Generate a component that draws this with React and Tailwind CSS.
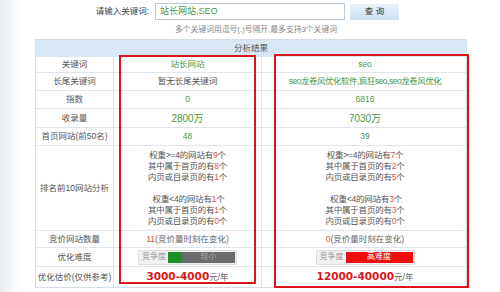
import React from "react";

const F = { fontFamily: '"Liberation Sans", "Noto Sans CJK SC", sans-serif' };
const G = "text-[#4a974a]";

function Row({ label, h, children, last }) {
  return (
    <div className={`grid grid-cols-[78px_148px_206px] ${last ? "" : "border-b border-[#dfe5ea]"}`} style={{ height: h }}>
      <div className="flex items-center justify-center border-r border-[#dfe5ea] text-[#555]">{label}</div>
      <div className="flex items-center justify-center border-r border-[#dfe5ea]">{children[0]}</div>
      <div className="flex items-center justify-center">{children[1]}</div>
    </div>
  );
}

const R = ({ children }) => <span className="text-[#e0504a]">{children}</span>;

function Rank({ a, b, c, d, e, f }) {
  return (
    <div className="flex flex-col items-center leading-[11px] text-[#555] tracking-[-0.2px]">
      <div>权重&gt;=4的网站有<R>{a}</R>个</div>
      <div>其中属于首页的有<R>{b}</R>个</div>
      <div>内页或目录页的有<R>{c}</R>个</div>
      <div className="h-[11px]"></div>
      <div>&nbsp;权重&lt;4的网站有<R>{d}</R>个</div>
      <div>其中属于首页的有<R>{e}</R>个</div>
      <div>内页或目录页的有<R>{f}</R>个</div>
    </div>
  );
}

function Difficulty({ hard }) {
  return (
    <div className="flex items-center w-[99px] h-[15px] border border-[#dedede] bg-[#f1f1f1] pl-[1px]">
      <div className="w-[28px] text-center text-[#999] text-[8px]">竞争度</div>
      <div className="flex-1 h-[11px] mr-[1px] relative flex">
        {hard ? (
          <div className="flex-1 bg-[#ee0d0d] flex items-center justify-center text-white text-[8px]">高难度</div>
        ) : (
          <>
            <div className="w-[14px] bg-[#1f8f2a]"></div>
            <div className="flex-1 bg-[#6b6b6b] flex items-center justify-center text-[#aaa] text-[8px]">较小</div>
          </>
        )}
      </div>
    </div>
  );
}

export default function App() {
  return (
    <div className="w-[500px] h-[292px] relative overflow-hidden bg-gradient-to-r from-[#e6edf3] via-white via-[4%] to-white text-[8.5px]" style={F}>
      <div className="flex items-center h-[17px] mt-[3px]">
        <div className="w-[155px] pr-[6px] text-right text-[#444]">请输入关键词:</div>
        <div className={`w-[190px] h-[17px] border border-[#bccad6] bg-white flex items-center px-[4px] ${G} text-[9px]`}>站长网站,SEO</div>
        <div className="ml-[5px] w-[49px] h-[16px] bg-gradient-to-b from-[#e8f1f9] to-[#cfe0f0] flex items-center justify-center text-[#333]">查 询</div>
      </div>
      <div className="h-[19px] flex items-center pl-[175px] text-[#888] text-[7.8px]">多个关键词用逗号(,)号隔开,最多支持3个关键词</div>
      <div className="ml-[35px] w-[432px] border border-[#d3dde6] bg-white">
        <div className="h-[17px] bg-[#d9e7f5] flex items-center justify-center text-[#555]">分析结果</div>
        <Row label="关键词" h={16}>
          <span className={G}>站长网站</span>
          <span className={G}>seo</span>
        </Row>
        <Row label="长尾关键词" h={18}>
          <span className="text-[#555]">暂无长尾关键词</span>
          <span className={`${G} tracking-[-0.5px]`}>seo龙卷风优化软件,疯狂seo,seo龙卷风优化</span>
        </Row>
        <Row label="指数" h={18}>
          <span className={G}>0</span>
          <span className={G}>6816</span>
        </Row>
        <Row label="收录量" h={19}>
          <span className={`${G} text-[10px]`}>2800万</span>
          <span className={`${G} text-[10px]`}>7030万</span>
        </Row>
        <Row label="首页网站(前50名)" h={18}>
          <span className={G}>48</span>
          <span className={G}>39</span>
        </Row>
        <Row label="排名前10网站分析" h={85}>
          <Rank a="9" b="8" c="1" d="1" e="1" f="0" />
          <Rank a="7" b="2" c="5" d="3" e="3" f="0" />
        </Row>
        <Row label="竞价网站数量" h={17}>
          <span className="text-[#666]"><R>11</R>(竞价量时刻在变化)</span>
          <span className="text-[#666]"><R>0</R>(竞价量时刻在变化)</span>
        </Row>
        <Row label="优化难度" h={19}>
          <Difficulty />
          <Difficulty hard />
        </Row>
        <Row label="优化估价(仅供参考)" h={20} last>
          <span className="text-[#666]">
            <span className="text-[#d8191c] font-bold text-[10.5px]" style={{ fontFamily: '"DejaVu Sans", sans-serif' }}>3000-4000</span>元/年
          </span>
          <span className="text-[#666]">
            <span className="text-[#d8191c] font-bold text-[10.5px]" style={{ fontFamily: '"DejaVu Sans", sans-serif' }}>12000-40000</span>元/年
          </span>
        </Row>
      </div>
      <div className="absolute left-[119px] top-[55px] w-[137px] h-[229px] border-2 border-[#d9141b]"></div>
      <div className="absolute left-[274px] top-[54px] w-[195px] h-[234px] border-2 border-[#d9141b]"></div>
    </div>
  );
}
